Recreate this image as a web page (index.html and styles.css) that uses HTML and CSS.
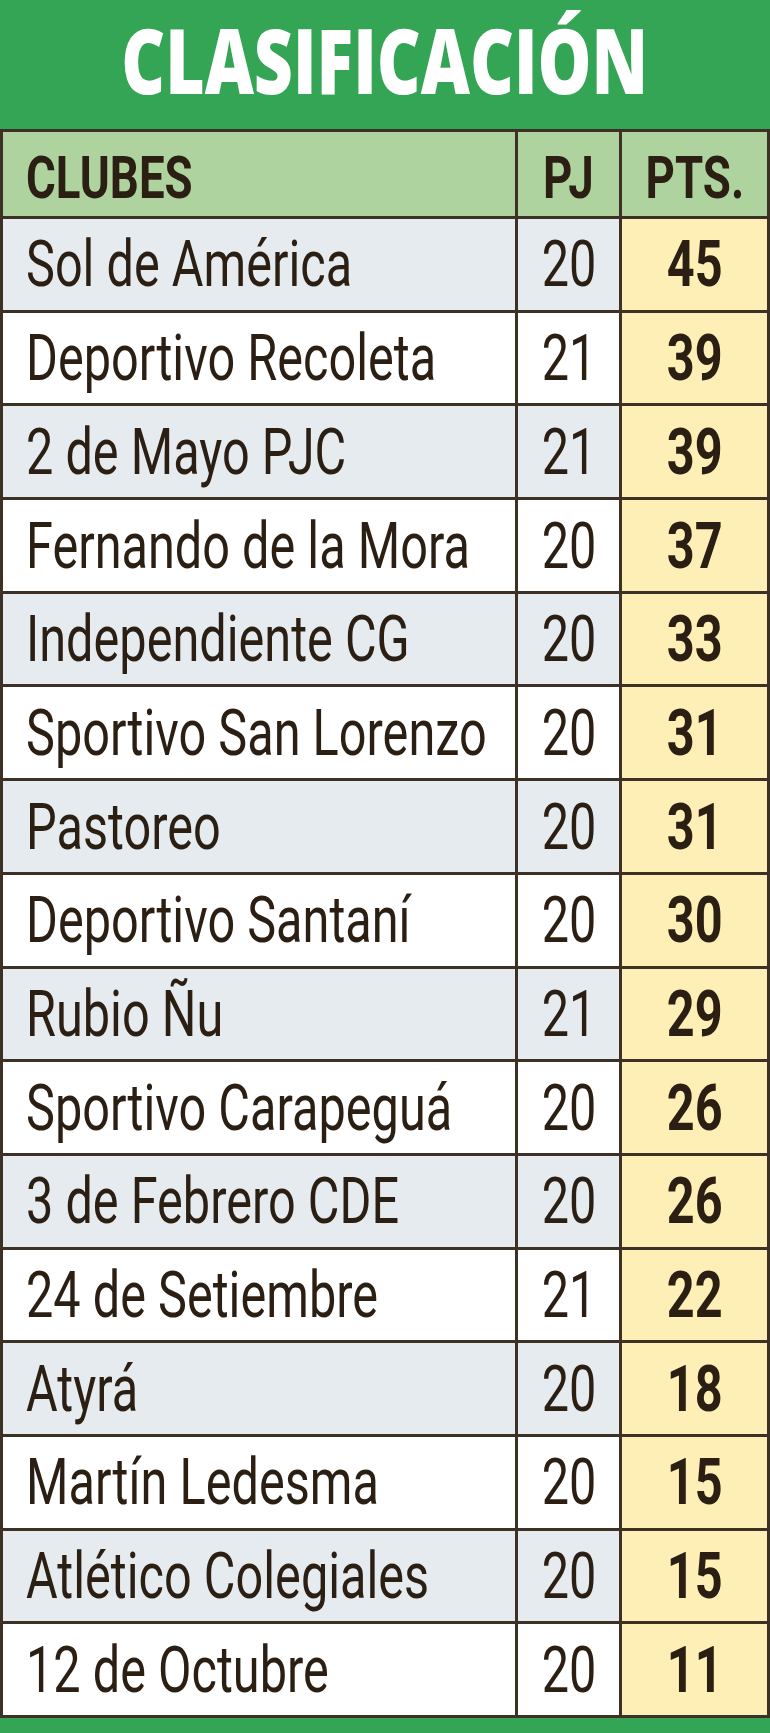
FILE: index.html
```html
<!DOCTYPE html>
<html lang="es">
<head>
<meta charset="utf-8">
<title>Clasificación</title>
<link rel="stylesheet" href="styles.css">
</head>
<body>
<div class="page">
  <header class="title"><h1 class="title-text">CLASIFICACIÓN</h1></header>
  <div class="table">
    <div class="cell head club"><span class="cx">CLUBES</span></div>
    <div class="cell head num"><span class="cx">PJ</span></div>
    <div class="cell head num"><span class="cx">PTS.</span></div>

    <div class="cell club shade"><span class="cx">Sol de América</span></div>
    <div class="cell num shade"><span class="cx">20</span></div>
    <div class="cell num pts"><span class="cx">45</span></div>

    <div class="cell club"><span class="cx">Deportivo Recoleta</span></div>
    <div class="cell num"><span class="cx">21</span></div>
    <div class="cell num pts"><span class="cx">39</span></div>

    <div class="cell club shade"><span class="cx">2 de Mayo PJC</span></div>
    <div class="cell num shade"><span class="cx">21</span></div>
    <div class="cell num pts"><span class="cx">39</span></div>

    <div class="cell club"><span class="cx">Fernando de la Mora</span></div>
    <div class="cell num"><span class="cx">20</span></div>
    <div class="cell num pts"><span class="cx">37</span></div>

    <div class="cell club shade"><span class="cx">Independiente CG</span></div>
    <div class="cell num shade"><span class="cx">20</span></div>
    <div class="cell num pts"><span class="cx">33</span></div>

    <div class="cell club"><span class="cx">Sportivo San Lorenzo</span></div>
    <div class="cell num"><span class="cx">20</span></div>
    <div class="cell num pts"><span class="cx">31</span></div>

    <div class="cell club shade"><span class="cx">Pastoreo</span></div>
    <div class="cell num shade"><span class="cx">20</span></div>
    <div class="cell num pts"><span class="cx">31</span></div>

    <div class="cell club"><span class="cx">Deportivo Santaní</span></div>
    <div class="cell num"><span class="cx">20</span></div>
    <div class="cell num pts"><span class="cx">30</span></div>

    <div class="cell club shade"><span class="cx">Rubio Ñu</span></div>
    <div class="cell num shade"><span class="cx">21</span></div>
    <div class="cell num pts"><span class="cx">29</span></div>

    <div class="cell club"><span class="cx">Sportivo Carapeguá</span></div>
    <div class="cell num"><span class="cx">20</span></div>
    <div class="cell num pts"><span class="cx">26</span></div>

    <div class="cell club shade"><span class="cx">3 de Febrero CDE</span></div>
    <div class="cell num shade"><span class="cx">20</span></div>
    <div class="cell num pts"><span class="cx">26</span></div>

    <div class="cell club"><span class="cx">24 de Setiembre</span></div>
    <div class="cell num"><span class="cx">21</span></div>
    <div class="cell num pts"><span class="cx">22</span></div>

    <div class="cell club shade"><span class="cx">Atyrá</span></div>
    <div class="cell num shade"><span class="cx">20</span></div>
    <div class="cell num pts"><span class="cx">18</span></div>

    <div class="cell club"><span class="cx">Martín Ledesma</span></div>
    <div class="cell num"><span class="cx">20</span></div>
    <div class="cell num pts"><span class="cx">15</span></div>

    <div class="cell club shade"><span class="cx">Atlético Colegiales</span></div>
    <div class="cell num shade"><span class="cx">20</span></div>
    <div class="cell num pts"><span class="cx">15</span></div>

    <div class="cell club"><span class="cx">12 de Octubre</span></div>
    <div class="cell num"><span class="cx">20</span></div>
    <div class="cell num pts"><span class="cx">11</span></div>
  </div>
  <div class="foot"></div>
</div>
</body>
</html>
```

FILE: styles.css
```css
html, body {
  margin: 0;
  padding: 0;
  background: #34a455;
}

.page {
  width: 770px;
  min-height: 1733px;
  display: flex;
  flex-direction: column;
  background: #34a455;
}

.title {
  height: 129px;
  display: flex;
  align-items: center;
  justify-content: center;
  padding-bottom: 10px;
  box-sizing: border-box;
}

.title-text {
  margin: 0;
  font-family: "Open Sans", "Liberation Sans", sans-serif;
  font-weight: 800;
  font-size: 91px;
  line-height: 1.3;
  color: #ffffff;
  white-space: nowrap;
  transform: scaleX(0.745);
}

.table {
  display: grid;
  grid-template-columns: 512px 101px 145px;
  grid-template-rows: 84px repeat(16, 90.7px);
  gap: 3px;
  padding: 3px;
  background: #3d3126;
}

.cell {
  display: flex;
  align-items: center;
  min-width: 0;
  background: #ffffff;
  color: #2b1e13;
  font-family: Roboto, "Liberation Sans", sans-serif;
  font-size: 64px;
  font-weight: 400;
  white-space: nowrap;
  padding-top: 3px;
  box-sizing: border-box;
}

.cx {
  display: inline-block;
  line-height: 1.2;
  transform: scaleX(0.76);
}

.club {
  padding-left: 23px;
}

.club .cx {
  transform-origin: left center;
}

.num {
  justify-content: center;
}

.num .cx {
  transform-origin: center center;
}

.shade {
  background: #e6ebf0;
}

.pts {
  background: #feefb6;
  font-weight: 700;
}

.head {
  background: #aed39f;
  font-weight: 700;
  font-size: 60px;
  padding-top: 8px;
}

.foot {
  flex: 1;
  background: #34a455;
}
```
